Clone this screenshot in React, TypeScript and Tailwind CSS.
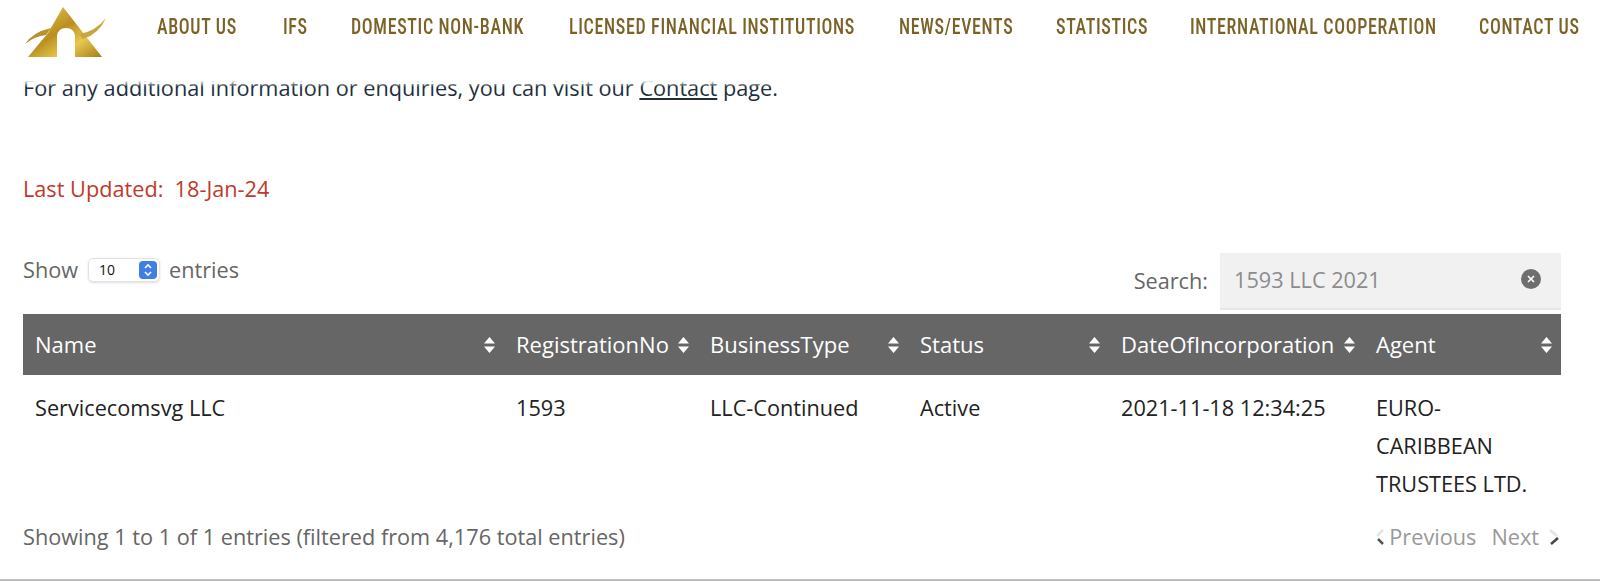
const navItems = [
  { label: 'ABOUT US', width: 'w-[82px]' },
  { label: 'IFS', width: 'w-[24px]' },
  { label: 'DOMESTIC NON-BANK', width: 'w-[174px]' },
  { label: 'LICENSED FINANCIAL INSTITUTIONS', width: 'w-[286px]' },
  { label: 'NEWS/EVENTS', width: 'w-[113px]' },
  { label: 'STATISTICS', width: 'w-[90px]' },
  { label: 'INTERNATIONAL COOPERATION', width: 'w-[245px]' },
  { label: 'CONTACT US', width: 'w-[102px]' },
];

const columns = [
  { label: 'Name', width: 'w-[481px]' },
  { label: 'RegistrationNo', width: 'w-[194px]' },
  { label: 'BusinessType', width: 'w-[210px]' },
  { label: 'Status', width: 'w-[201px]' },
  { label: 'DateOfIncorporation', width: 'w-[255px]' },
  { label: 'Agent', width: 'w-[197px]' },
];

const row = ['Servicecomsvg LLC', '1593', 'LLC-Continued', 'Active', '2021-11-18 12:34:25'];

function Logo() {
  return (
    <svg width="112" height="62" viewBox="0 0 112 62" className="shrink-0 blur-[0.5px]">
      <defs>
        <linearGradient id="gold" x1="0" y1="0" x2="1" y2="1">
          <stop offset="0" stopColor="#f0d264" />
          <stop offset="0.45" stopColor="#b98f1f" />
          <stop offset="0.7" stopColor="#e8c74f" />
          <stop offset="1" stopColor="#a37d17" />
        </linearGradient>
      </defs>
      <path d="M63 7 L102 57 L75 57 L75 36 Q74 28 66 28 Q58 28 57 36 L57 57 L28 57 L48 33 Z" fill="url(#gold)" />
      <path d="M25 44 Q33 32 51 28 L46 35 Q35 36 25 44 Z" fill="#b8912a" />
      <path d="M79 34 Q95 32 106 18 Q99 34 83 39 Z" fill="#c9a63c" />
    </svg>
  );
}

function SortIcon() {
  return (
    <svg width="11" height="16" viewBox="0 0 11 16" className="shrink-0" fill="#fff">
      <path d="M5.5 0 L11 6.5 L0 6.5 Z" />
      <path d="M5.5 16 L0 9.5 L11 9.5 Z" />
    </svg>
  );
}

function Chevron({ left }: { left?: boolean }) {
  return (
    <svg width="14" height="18" viewBox="0 0 14 18" fill="none" strokeWidth="2.5">
      {left ? (
        <>
          <path d="M9 2 L3 8" stroke="#e4e4e4" />
          <path d="M4 11 L9 16" stroke="#555" />
        </>
      ) : (
        <>
          <path d="M3 2 L10 8" stroke="#e4e4e4" />
          <path d="M11 10 L4 16" stroke="#444" />
        </>
      )}
    </svg>
  );
}

export default function App() {
  return (
    <div className="h-[581px] overflow-hidden bg-white font-['Open_Sans',sans-serif] border-b-2 border-[#bdbdbd]">
      <header className="relative z-10 h-[81px] bg-white flex">
        <div className="w-[157px] shrink-0">
          <Logo />
        </div>
        <nav className="flex gap-[44px] pt-[10px] h-[32px]">
          {navItems.map((item) => (
            <a key={item.label} className={`${item.width} block text-[#7b6226] text-[18px] font-medium leading-[30px] tracking-[0.65px] whitespace-nowrap scale-y-[1.25] font-['Roboto_Condensed','Liberation_Sans_Narrow','Liberation_Sans',sans-serif]`}>
              {item.label}
            </a>
          ))}
        </nav>
        {/* soft edge where the page text slides under the header */}
        <div className="absolute top-full left-0 right-0 h-[6px] bg-linear-to-b from-white/90 to-white/0" />
      </header>

      <main className="pl-[23px] pr-[39px] text-[21.7px]">
        <p className="-mt-[8px] leading-[30px] text-[#1c2f3c]">
          For any additional information or enquiries, you can visit our <span className="underline underline-offset-2">Contact</span> page.
        </p>
        <p className="mt-[71px] leading-[30px] text-[#c0392b]">Last Updated:&nbsp; 18-Jan-24</p>

        <div className="mt-[49px] flex justify-between items-start">
          <div className="flex items-center gap-[10px] leading-[30px] text-[#666] pt-[2px]">
            <span>Show</span>
            <div className="w-[72px] h-[24px] rounded-[5px] border border-[#e2e2e2] shadow-sm flex items-center justify-between pl-[10px] pr-[2px] text-[14px] text-[#111]">
              <span>10</span>
              <span className="w-[18px] h-[18px] rounded-[4px] bg-[#3f7fe4] flex items-center justify-center">
                <svg width="10" height="14" viewBox="0 0 10 14" fill="none" stroke="#fff" strokeWidth="1.6">
                  <path d="M2 5 L5 2 L8 5" />
                  <path d="M2 9 L5 12 L8 9" />
                </svg>
              </span>
            </div>
            <span className="-ml-[1px]">entries</span>
          </div>
          <div className="flex items-center gap-[12px] text-[#666]">
            <span>Search:</span>
            <div className="w-[341px] h-[57px] bg-[#f1f1f1] border-b-2 border-[#e6e6e6] flex items-center justify-between pl-[14px] pr-[20px] text-[#8c8c8c]">
              <span>1593 LLC 2021</span>
              <span className="w-[20px] h-[20px] rounded-full bg-[#6e6e6e] flex items-center justify-center -mt-[4px]">
                <svg width="8" height="8" viewBox="0 0 8 8" stroke="#fff" strokeWidth="1.6">
                  <path d="M1 1 L7 7 M7 1 L1 7" />
                </svg>
              </span>
            </div>
          </div>
        </div>

        <table className="mt-[4px] w-[1538px] table-fixed border-collapse">
          <colgroup>
            {columns.map((c) => (
              <col key={c.label} className={c.width} />
            ))}
          </colgroup>
          <thead>
            <tr className="h-[61px] bg-[#666] text-white text-[22px]">
              {columns.map((c) => (
                <th key={c.label} className="pl-[12px] pr-[9px] font-normal text-left">
                  <div className="flex items-center justify-between whitespace-nowrap">
                    <span>{c.label}</span>
                    <SortIcon />
                  </div>
                </th>
              ))}
            </tr>
          </thead>
          <tbody>
            <tr className="text-[#222] leading-[38px] align-top">
              {row.map((cell) => (
                <td key={cell} className="px-[12px] pt-[14px] pb-[4px]">
                  {cell}
                </td>
              ))}
              <td className="px-[12px] pt-[14px] pb-[4px]">EURO-CARIBBEAN TRUSTEES LTD.</td>
            </tr>
          </tbody>
        </table>

        <div className="mt-[15px] flex items-center justify-between leading-[30px] text-[#666]">
          <span>Showing 1 to 1 of 1 entries (filtered from 4,176 total entries)</span>
          <div className="flex items-center text-[#999]">
            <Chevron left />
            <span className="ml-[1px]">Previous</span>
            <span className="ml-[15px]">Next</span>
            <span className="ml-[8px]">
              <Chevron />
            </span>
          </div>
        </div>
      </main>
    </div>
  );
}
